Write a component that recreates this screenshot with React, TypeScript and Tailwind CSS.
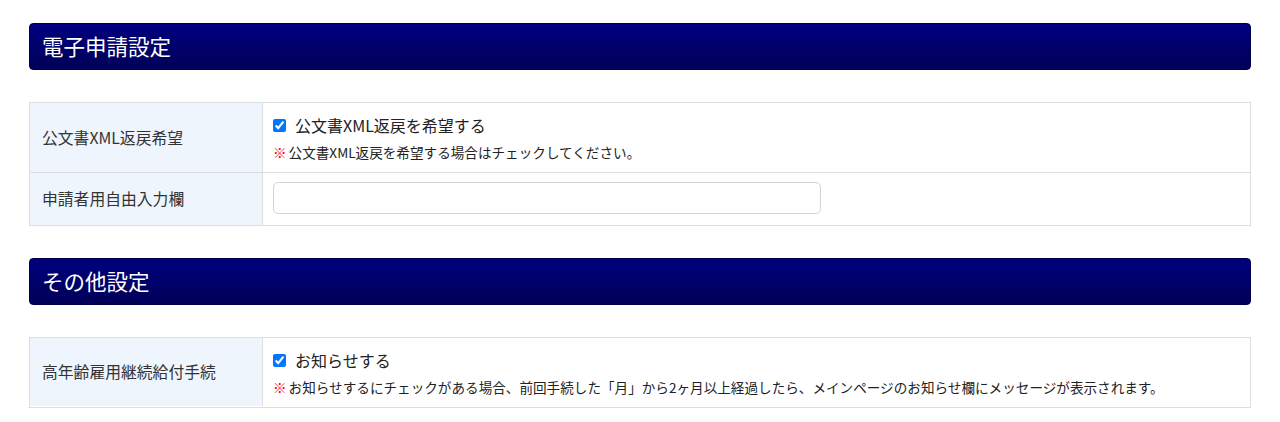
import React from "react";

const font = { fontFamily: '"Noto Sans CJK JP", "Noto Sans", sans-serif' };

function SectionHeader({ title }: { title: string }) {
  return (
    <div className="flex h-[47px] items-center rounded-[4px] border border-[#00004a] bg-gradient-to-b from-[#000080] to-[#000058] px-[12px] text-[21.5px] text-white">
      {title}
    </div>
  );
}

function Note({ children }: { children: React.ReactNode }) {
  return (
    <p className="text-[13.6px] leading-[20px] text-[#222]">
      <span className="mr-[2px] font-bold text-[#ff0000]">※</span>
      {children}
    </p>
  );
}

function CheckRow({ label, note }: { label: string; note: string }) {
  return (
    <div className="flex flex-col gap-[5px] pt-[10px] pb-[10px] pl-[10px]">
      <label className="flex h-[24px] items-center gap-[9px] text-[16px] text-[#222]">
        <input type="checkbox" defaultChecked className="h-[13px] w-[13px] accent-[#0075ff]" />
        {label}
      </label>
      <Note>{note}</Note>
    </div>
  );
}

function Row({
  label,
  height,
  last,
  children,
}: {
  label: string;
  height: string;
  last?: boolean;
  children: React.ReactNode;
}) {
  return (
    <div className={`grid grid-cols-[233px_1fr] ${last ? "" : "border-b border-[#dedede]"}`}>
      <div className={`flex ${height} items-center border-r border-[#dedede] bg-[#eef5fc] pl-[12px] text-[15.8px] text-[#333]`}>
        {label}
      </div>
      <div className="flex flex-col justify-center">{children}</div>
    </div>
  );
}

export default function App() {
  return (
    <div className="min-h-[422px] bg-white px-[29px] pt-[23px]" style={font}>
      <SectionHeader title="電子申請設定" />
      <div className="mt-[32px] border border-[#dedede]">
        <Row label="公文書XML返戻希望" height="h-[69px]">
          <CheckRow
            label="公文書XML返戻を希望する"
            note="公文書XML返戻を希望する場合はチェックしてください。"
          />
        </Row>
        <Row label="申請者用自由入力欄" height="h-[52px]" last>
          <div className="pl-[10px] pb-[2px]">
            <input
              type="text"
              className="h-[32px] w-[548px] rounded-[5px] border border-[#d4d4d4] bg-white px-2 text-[15px] outline-none"
            />
          </div>
        </Row>
      </div>

      <div className="mt-[32px]">
        <SectionHeader title="その他設定" />
      </div>
      <div className="mt-[32px] border border-[#dedede]">
        <Row label="高年齢雇用継続給付手続" height="h-[68px]" last>
          <CheckRow
            label="お知らせする"
            note="お知らせするにチェックがある場合、前回手続した「月」から2ヶ月以上経過したら、メインページのお知らせ欄にメッセージが表示されます。"
          />
        </Row>
      </div>
    </div>
  );
}
